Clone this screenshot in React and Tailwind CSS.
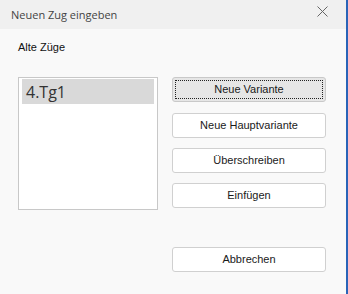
export default function App() {
  const btn =
    "h-[25px] w-[154px] rounded-[3px] border border-[#d0d0d0] bg-white text-[11px] text-[#1a1a1a] flex items-center justify-center";
  return (
    <div
      className="w-[348px] h-[294px] flex bg-[#f9f9f9]"
      style={{ fontFamily: '"Liberation Sans", Arial, sans-serif' }}
    >
      <div className="flex-1 flex flex-col">
        <div className="h-[29px] bg-[#f0f0f0] flex items-center justify-between pl-[11px] pr-[18px]">
          <span
            className="text-[11px] text-[#444] pt-[1px]"
            style={{ fontFamily: '"Open Sans", "Noto Sans", sans-serif' }}
          >
            Neuen Zug eingeben
          </span>
          <svg width="11" height="11" viewBox="0 0 11 11" className="mb-[6px]">
            <path d="M0.5 0.5 L10.5 10.5 M10.5 0.5 L0.5 10.5" stroke="#666" strokeWidth="1" fill="none" />
          </svg>
        </div>
        <div className="flex flex-col pl-[18px] pt-[12px]">
          <div className="text-[11px] leading-[13px] text-[#111]">Alte Züge</div>
          <div className="flex mt-[23px] gap-[14px]">
            <div className="w-[140px] h-[133px] border border-[#c8c8c8] bg-white p-[1px] pl-[3px] pr-[3px]">
              <div
                className="h-[25px] bg-[#d9d9d9] flex items-center pl-[4px] text-[16px] text-[#333]"
                style={{ fontFamily: '"Open Sans", "Noto Sans", sans-serif' }}
              >
                4.Tg1
              </div>
            </div>
            <div className="flex flex-col">
              <div className="h-[25px] w-[154px] rounded-[3px] border border-[#c9c9c9] bg-[#e6e6e6] p-[2px]">
                <div className="w-full h-full border border-dotted border-[#222] flex items-center justify-center text-[11px] text-[#1a1a1a]">
                  Neue Variante
                </div>
              </div>
              <div className={btn + " mt-[11px]"}>Neue Hauptvariante</div>
              <div className={btn + " mt-[10px]"}>Überschreiben</div>
              <div className={btn + " mt-[10px]"}>Einfügen</div>
              <div className={btn + " mt-[39px]"}>Abbrechen</div>
            </div>
          </div>
        </div>
      </div>
      <div className="w-[2px] h-full bg-[#2a64b8]" />
    </div>
  );
}
